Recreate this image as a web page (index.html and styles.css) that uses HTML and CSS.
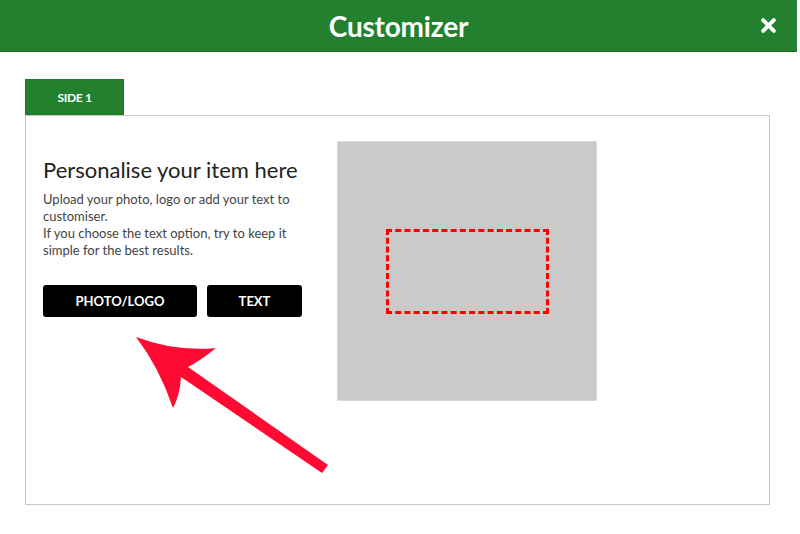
FILE: index.html
```html
<!DOCTYPE html>
<html lang="en">
<head>
    <meta charset="UTF-8">
    <meta name="viewport" content="width=device-width, initial-scale=1.0">
    <title>Customizer</title>
    <link rel="stylesheet" href="styles.css">
</head>
<body>

    <div class="header">
        <h1>Customizer</h1>
        <svg class="close" width="14" height="14" viewBox="0 0 14 14">
            <path d="M2,2 L12,12 M12,2 L2,12" stroke="#fff" stroke-width="3.6" stroke-linecap="round"/>
        </svg>
    </div>

    <div class="main">
        <div class="tabs">
            <div class="tab active">SIDE 1</div>
        </div>

        <div class="panel">
            <div class="intro">
                <h2>Personalise your item here</h2>
                <p>Upload your photo, logo or add your text to customiser.<br>
                If you choose the text option, try to keep it simple for the best results.</p>
                <div class="buttons">
                    <button class="btn btn-photo">PHOTO/LOGO</button>
                    <button class="btn btn-text">TEXT</button>
                </div>
            </div>

            <div class="preview">
                <div class="print-area"></div>
            </div>
        </div>
    </div>

    <!-- freccia che indica il pulsante -->
    <svg class="arrow" width="800" height="534" viewBox="0 0 800 534">
        <path d="M136,337 Q176,352 216,348 Q200,361 188,367 L328,465 L322,473 L181,377 Q180,395 173,408 Q159,367 136,337 Z" fill="#ff0a33"/>
    </svg>

</body>
</html>
```

FILE: styles.css
```css
body {
    font-family: 'Lato', sans-serif;
    background: #fff;
    color: #222;
    margin: 0;
    padding: 0;
    position: relative;
    width: 800px;
    height: 534px;
    overflow: hidden;
}
.header {
    background: #22802f;
    border-bottom: 1px solid #1b6a27;
    height: 51px;
    width: 797px;
    display: flex;
    align-items: center;
    justify-content: center;
    position: relative;
}
.header h1 {
    margin: 0;
    color: #fff;
    font-size: 28px;
    font-weight: 700;
    letter-spacing: -0.2px;
}
.close {
    position: absolute;
    right: 21px;
    top: 18px;
    width: 15px;
    height: 15px;
}
.main {
    padding: 27px 0 0 25px;
}
.tabs {
    display: flex;
}
.tab {
    width: 99px;
    height: 36px;
    box-sizing: border-box;
    border: 1px solid #1f7a2c;
    display: flex;
    align-items: center;
    justify-content: center;
    font-size: 12px;
    font-weight: 700;
    letter-spacing: -0.3px;
}
.tab.active {
    background: #22802f;
    color: #fff;
}
.panel {
    width: 745px;
    height: 390px;
    box-sizing: border-box;
    border: 1px solid #c8c8c8;
    display: flex;
    padding: 25px 0 0 17px;
    gap: 34px;
}
.intro {
    width: 260px;
    padding-top: 15px;
}
.intro h2 {
    margin: 0 0 8px;
    font-size: 22px;
    font-weight: 400;
    color: #222;
}
.intro p {
    margin: 0;
    font-size: 13px;
    line-height: 17px;
    color: #444;
}
.buttons {
    display: flex;
    gap: 10px;
    margin-top: 26px;
}
.btn {
    background: #000;
    color: #fff;
    border: none;
    border-radius: 3px;
    height: 32px;
    font-family: 'Lato', sans-serif;
    font-size: 13px;
    font-weight: 700;
    cursor: pointer;
}
.btn-photo {
    width: 154px;
}
.btn-text {
    width: 95px;
}
.preview {
    width: 260px;
    height: 260px;
    background: #cbcac9;
    border: 1px solid #d8d8d8;
    box-sizing: border-box;
    position: relative;
}
.print-area {
    position: absolute;
    left: 48px;
    top: 87px;
    width: 163px;
    height: 85px;
    box-sizing: border-box;
    border: 3px dashed #ff0000;
}
.arrow {
    position: absolute;
    left: 0;
    top: 0;
    pointer-events: none;
}
```
